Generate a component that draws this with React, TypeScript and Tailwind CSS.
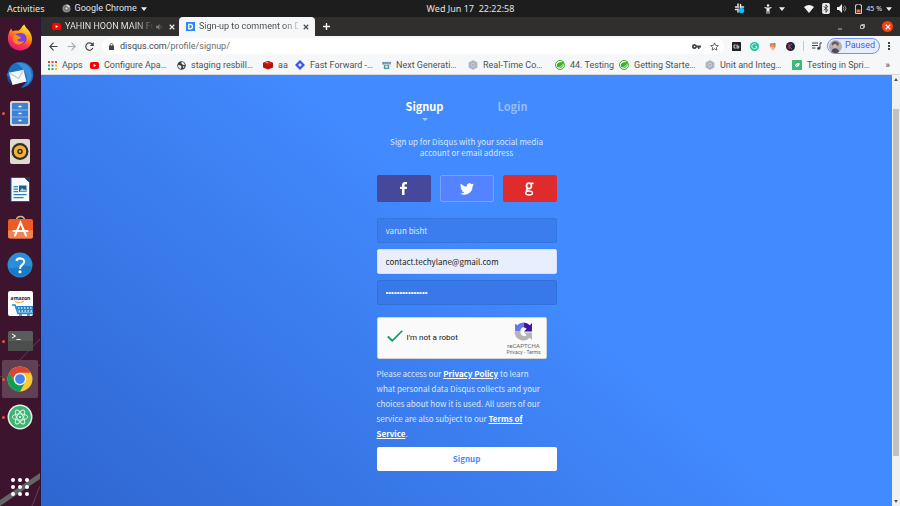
import React from "react";

type IconProps = { className?: string };

const YouTube = () => (
  <svg viewBox="0 0 20 20" className="h-[9px] w-[9px] shrink-0" aria-hidden="true">
    <rect x="0" y="2" width="20" height="16" rx="4" fill="#f00" />
    <path d="M8 6.500l6 3.500-6 3.500z" fill="#fff" />
  </svg>
);

const AppsGrid = () => (
  <svg viewBox="0 0 9 9" className="h-[9px] w-[9px] shrink-0" aria-hidden="true">
    <path d="M0 0h2v2H0zM3.500 0h2v2h-2zM7 0h2v2H7z" fill="#ea4335" />
    <path d="M0 3.500h2v2H0z" fill="#34a853" />
    <path d="M3.500 3.500h2v2h-2z" fill="#4285f4" />
    <path d="M7 3.500h2v2H7z" fill="#fbbc05" />
    <path d="M0 7h2v2H0zM3.500 7h2v2h-2z" fill="#34a853" />
    <path d="M7 7h2v2H7z" fill="#fbbc05" />
  </svg>
);

const Globe = () => (
  <svg viewBox="0 0 20 20" className="h-[9px] w-[9px] shrink-0" aria-hidden="true">
    <circle cx="10" cy="10" r="9.500" fill="#3c4043" />
    <path d="M2 9l6 1 2 3-2 5C4 16 2 13 2 9zM10 2l4 1 4 5-4 1-4-3zM13 11l4 1-3 4z" fill="#f1f3f4" />
  </svg>
);

const Redis = () => (
  <svg viewBox="0 0 20 20" className="h-[10px] w-[10px] shrink-0" aria-hidden="true">
    <path d="M0 6l10-4 10 4v9l-10 4-10-4z" fill="#b5120b" />
    <path d="M0 5.500l10-4 10 4-10 4.500z" fill="#d8241b" />
    <path d="M5 5l4-1.500 1 2z" fill="#fff" />
  </svg>
);

const Diamond = () => (
  <svg viewBox="0 0 20 20" className="h-[10px] w-[10px] shrink-0" aria-hidden="true">
    <path d="M10 0l10 10-10 10L0 10z" fill="#3f51e8" />
    <path d="M10 6l4 4-4 4-4-4z" fill="#dfe4ff" />
  </svg>
);

const Tools = () => (
  <svg viewBox="0 0 20 20" className="h-[9px] w-[9px] shrink-0" aria-hidden="true">
    <path d="M0 2h20v6H0z" fill="#8fa9c4" />
    <path d="M2 4h3M7 4h3M12 4h2M16 4h3" stroke="#5c7da3" strokeWidth="3" />
    <path d="M4 9h12v9H4z" fill="#4c9d92" />
    <circle cx="10" cy="13" r="3" fill="#cff0df" />
  </svg>
);

const Cube = () => (
  <svg viewBox="0 0 20 20" className="h-[10px] w-[10px] shrink-0" aria-hidden="true">
    <path d="M10 0l9 5v10l-9 5-9-5V5z" fill="#b3bccb" />
    <path d="M10 4l5 3v6l-5 3-5-3V7z" fill="#dde2ea" stroke="#8792a8" />
    <path d="M10 4v12M5 7l10 6M15 7L5 13" stroke="#8792a8" />
  </svg>
);

const Spring = () => (
  <svg viewBox="0 0 20 20" className="h-[10px] w-[10px] shrink-0" aria-hidden="true">
    <circle cx="10" cy="10" r="9" fill="#fff" stroke="#3fae29" strokeWidth="2" />
    <path d="M17 2c-2 3-5 2-9 3-5 2-6 8-2 11 7 2 13-4 11-14z" fill="#3fae29" />
    <path d="M5 15c5 0 8-2 10-6" stroke="#fff" strokeWidth="1.500" fill="none" />
  </svg>
);

const GreenLeaf = () => (
  <svg viewBox="0 0 20 20" className="h-[10px] w-[10px] shrink-0" aria-hidden="true">
    <rect width="20" height="20" rx="1" fill="#3cb878" />
    <path d="M6 14c-1-6 3-8 9-8 1 5-3 9-9 8z" fill="#fff" />
    <path d="M4 16l7-7" stroke="#3cb878" strokeWidth="1.500" />
  </svg>
);

const ChromeLogo = ({ className }: IconProps) => (
  <svg viewBox="0 0 48 48" className={className} aria-hidden="true">
    <circle cx="24" cy="24" r="23" fill="#fbc934" />
    <path d="M4.100 12.500A23 23 0 0 1 43.900 12.500H24A11.500 11.500 0 0 0 14 29.700z" fill="#db4437" />
    <path d="M4.100 12.500A23 23 0 0 0 24 47L34 29.700A11.500 11.500 0 0 1 14 29.700z" fill="#0f9d58" />
    <circle cx="24" cy="24" r="11.500" fill="#f1f1f1" />
    <circle cx="24" cy="24" r="9" fill="#4285f4" />
  </svg>
);

const bookmarks = [
  { label: "Apps", icon: <AppsGrid />, width: "w-[42px]" },
  { label: "Configure Apa…", icon: <YouTube />, width: "w-[87px]" },
  { label: "staging resbill…", icon: <Globe />, width: "w-[86px]" },
  { label: "aa", icon: <Redis />, width: "w-[32px]" },
  { label: "Fast Forward -…", icon: <Diamond />, width: "w-[87px]" },
  { label: "Next Generati…", icon: <Tools />, width: "w-[86px]" },
  { label: "Real-Time Co…", icon: <Cube />, width: "w-[87px]" },
  { label: "44. Testing", icon: <Spring />, width: "w-[64px]" },
  { label: "Getting Starte…", icon: <Spring />, width: "w-[86px]" },
  { label: "Unit and Integ…", icon: <Cube />, width: "w-[87px]" },
  { label: "Testing in Spri…", icon: <GreenLeaf />, width: "w-[82px]" },
];

const Firefox = () => (
  <svg viewBox="0 0 48 48" className="h-[27px] w-[27px]" aria-hidden="true">
    <defs>
      <linearGradient id="ff" x1="0.800" y1="0" x2="0.300" y2="1">
        <stop offset="0" stopColor="#fff44f" />
        <stop offset="0.400" stopColor="#ff980e" />
        <stop offset="0.700" stopColor="#ff3647" />
        <stop offset="1" stopColor="#e31587" />
      </linearGradient>
    </defs>
    <path d="M31 1c1 5 5 7 8 11 10 12 7 34-15 35C6 47-2 31 3 17c1-4 3-6 4-9l3 5c3-2 6-2 9-1 4-1 5-4 7-6 1-2 3-4 5-5z" fill="url(#ff)" />
    <path d="M14 20c5-5 14-6 19 0 5 8-1 17-10 16-8-1-11-9-9-16z" fill="#7542e5" />
    <path d="M12 20c3-1 7 0 10 2l4 3-8 3c2 4 9 5 13 1-2 7-11 10-17 5-5-4-5-10-2-14z" fill="#ff8a16" />
  </svg>
);

const Thunderbird = () => (
  <svg viewBox="0 0 48 48" className="h-[28px] w-[28px]" aria-hidden="true">
    <path d="M4 17C8 4 20-1 32 3c12 4 17 15 14 27-3 9-10 15-20 16l9-10L7 33 1 24z" fill="#1b6fc4" />
    <path d="M18 4c13-4 28 7 26 24-1 5-4 9-8 12 3-13-4-27-18-36z" fill="#3c8fd9" />
    <path d="M5 20l25-5 5 20-24 6z" fill="#f5f7fa" />
    <path d="M5 20l17 10 8-15" fill="none" stroke="#b6c5d6" strokeWidth="2" />
    <path d="M1 23c4 5 7 11 8 18l-6-7z" fill="#174b91" />
  </svg>
);

const Files = () => (
  <svg viewBox="0 0 40 50" className="h-[25px] w-[20px]" aria-hidden="true">
    <rect width="40" height="50" rx="4" fill="#d9d3cc" />
    <rect x="4" y="4" width="32" height="42" rx="2" fill="#3d82d6" />
    <path d="M4 18h32M4 32h32" stroke="#87b8ef" strokeWidth="2" />
    <path d="M17 11h6M17 25h6M17 39h6" stroke="#fff" strokeWidth="3" />
  </svg>
);

const Rhythmbox = () => (
  <svg viewBox="0 0 40 50" className="h-[25px] w-[20px]" aria-hidden="true">
    <rect width="40" height="50" rx="4" fill="#dfd9d0" />
    <circle cx="20" cy="25" r="17" fill="#2f2f2f" />
    <circle cx="20" cy="25" r="9" fill="none" stroke="#f5b32e" strokeWidth="7" />
    <circle cx="20" cy="25" r="2.500" fill="#f5b32e" />
  </svg>
);

const Writer = () => (
  <svg viewBox="0 0 40 50" className="h-[25px] w-[20px]" aria-hidden="true">
    <path d="M2 1h27l10 10v38H2z" fill="#f7fafc" stroke="#125f92" strokeWidth="2" />
    <path d="M28 0h12v12z" fill="#0d3f68" />
    <path d="M7 19h9M7 24h9M7 29h9M7 35h26M7 41h20" stroke="#2a84bd" strokeWidth="2.500" />
    <rect x="18" y="17" width="15" height="13" fill="#245d80" />
    <path d="M19 29l5-7 4 4 2-2 3 5z" fill="#a9d4e6" />
  </svg>
);

const Software = () => (
  <svg viewBox="0 0 50 50" className="h-[25px] w-[25px]" aria-hidden="true">
    <path d="M17 11C17 0 33 0 33 11" fill="none" stroke="#cdb78f" strokeWidth="3" />
    <rect y="8" width="50" height="39" rx="4" fill="#ef5b25" />
    <path d="M0 31h50v12a4 4 0 0 1-4 4H4a4 4 0 0 1-4-4z" fill="#f48152" />
    <path d="M14 41l11-26 11 26M11 32h28" fill="none" stroke="#fff" strokeWidth="4" strokeLinecap="round" />
  </svg>
);

const Help = () => (
  <svg viewBox="0 0 50 50" className="h-[26px] w-[26px]" aria-hidden="true">
    <circle cx="25" cy="25" r="24" fill="#2a8fd8" />
    <path d="M2 30a24 24 0 0 0 46 0C35 20 20 35 2 30z" fill="#1d79c0" />
    <path d="M18 17c2-7 16-6 15 2-1 6-8 6-8 13" fill="none" stroke="#fff" strokeWidth="4" />
    <circle cx="25" cy="38" r="3" fill="#fff" />
  </svg>
);

const Amazon = () => (
  <svg viewBox="0 0 50 50" className="h-[25px] w-[25px]" aria-hidden="true">
    <rect width="50" height="50" rx="4" fill="#fff" />
    <text x="25" y="17" textAnchor="middle" fontFamily="Open Sans, sans-serif" fontWeight="700" fontSize="10" fill="#222">amazon</text>
    <path d="M13 20c6 4 13 4 19 0" fill="none" stroke="#f59b23" strokeWidth="2" />
    <path d="M8 28h6l6 17h30" fill="none" stroke="#2488cf" strokeWidth="3" />
    <path d="M16 30h34v13H21z" fill="#2488cf" />
    <path d="M20 34h30M21 40h29" stroke="#d7edfb" strokeWidth="3" strokeDasharray="3 3" />
    <path d="M22 48h6M38 48h6" stroke="#2488cf" strokeWidth="3" />
  </svg>
);

const Terminal = () => (
  <svg viewBox="0 0 50 40" className="h-[20px] w-[25px]" aria-hidden="true">
    <rect width="50" height="40" rx="3" fill="#5a5c5b" />
    <path d="M0 20h50v17a3 3 0 0 1-3 3H3a3 3 0 0 1-3-3z" fill="#4c4e4d" />
    <path d="M8 6l7 4-7 4M17 17h8" fill="none" stroke="#fff" strokeWidth="2" />
  </svg>
);

const Atom = () => (
  <svg viewBox="0 0 50 50" className="h-[26px] w-[26px]" aria-hidden="true">
    <circle cx="25" cy="25" r="24" fill="#e5efe9" />
    <circle cx="25" cy="25" r="21" fill="#3fb373" />
    <g fill="none" stroke="#d8f7e4" strokeWidth="1.800">
      <ellipse cx="25" cy="25" rx="15" ry="6" />
      <ellipse cx="25" cy="25" rx="15" ry="6" transform="rotate(60 25 25)" />
      <ellipse cx="25" cy="25" rx="15" ry="6" transform="rotate(120 25 25)" />
    </g>
    <circle cx="25" cy="25" r="2" fill="#fff" />
  </svg>
);

const launchers = [
  { name: "Firefox", icon: <Firefox />, running: false, active: false },
  { name: "Thunderbird", icon: <Thunderbird />, running: false, active: false },
  { name: "Files", icon: <Files />, running: true, active: false },
  { name: "Rhythmbox", icon: <Rhythmbox />, running: false, active: false },
  { name: "Writer", icon: <Writer />, running: false, active: false },
  { name: "Software", icon: <Software />, running: false, active: false },
  { name: "Help", icon: <Help />, running: false, active: false },
  { name: "Amazon", icon: <Amazon />, running: false, active: false },
  { name: "Terminal", icon: <Terminal />, running: true, active: false },
  { name: "Chrome", icon: <ChromeLogo className="h-[26px] w-[26px]" />, running: true, active: true },
  { name: "Atom", icon: <Atom />, running: true, active: false },
];

const Caret = () => <svg viewBox="0 0 8 5" className="h-[4px] w-[6px] shrink-0" aria-hidden="true"><path d="M0 0h8L4 5z" fill="#eee" /></svg>;

function TopBar() {
  return (
    <header className="grid h-[17px] shrink-0 grid-cols-[1fr_auto_1fr] items-center bg-[#1d1d1d] pr-[8px] pl-[7px] text-[9px] leading-[17px] text-[#e2e2e2]">
      <div className="flex items-center gap-[17px]">
        <button>Activities</button>
        <button className="flex items-center gap-[4px] font-['Roboto',sans-serif]">
          <svg viewBox="0 0 20 20" className="h-[9px] w-[9px]" aria-hidden="true">
            <circle cx="10" cy="10" r="9" fill="#888" />
            <path d="M10 10V1a9 9 0 0 1 8 5z" fill="#ddd" />
            <circle cx="10" cy="10" r="4" fill="#ccc" stroke="#555" strokeWidth="2" />
          </svg>
          Google Chrome
          <Caret />
        </button>
      </div>
      <time className="pl-[42px] whitespace-pre">Wed Jun 17  22:22:58</time>
      <div className="flex items-center justify-end">
        <svg viewBox="0 0 22 22" className="mr-[19px] h-[11px] w-[11px]" aria-label="Slack">
          <path d="M8 2v3M3 8h6M8 12v6M13 3v6M15 8h4M3 13h2" stroke="#e8e8e8" strokeWidth="3" strokeLinecap="round" />
          <circle cx="15" cy="15" r="5.500" fill="#15b9f4" />
        </svg>
        <svg viewBox="0 0 16 20" className="mr-[7px] h-[10px] w-[8px]" aria-label="Accessibility">
          <circle cx="8" cy="3" r="2.500" fill="#eee" />
          <path d="M1 6l5 1h4l5-1v2l-4 1.500v10H9v-5H7v5H5v-10L1 8z" fill="#eee" />
        </svg>
        <Caret />
        <svg viewBox="0 0 20 16" className="mr-[8px] ml-[19px] h-[8px] w-[10px]" aria-label="Wi-Fi">
          <path d="M0 4q10-8 20 0L10 16z" fill="#f2f2f2" />
        </svg>
        <svg viewBox="0 0 14 20" className="mr-[7px] h-[11px] w-[8px]" aria-label="Bluetooth">
          <rect width="14" height="20" rx="3" fill="#eee" />
          <path d="M3 6l7 7-3 4V3l3 4-7 6" fill="none" stroke="#222" strokeWidth="1.500" />
        </svg>
        <svg viewBox="0 0 20 18" className="mr-[8px] h-[9px] w-[10px]" aria-label="Volume">
          <path d="M0 6h4l6-6v18l-6-6H0z" fill="#eee" />
          <path d="M12 5q4 4 0 8M15 3q6 6 0 12" fill="none" stroke="#bbb" strokeWidth="1.500" />
        </svg>
        <svg viewBox="0 0 14 20" className="mr-[4px] h-[10px] w-[7px]" aria-label="Battery">
          <path d="M4 0h6v2h3v17H1V2h3z" fill="none" stroke="#ccc" strokeWidth="2" />
          <path d="M3 11h8v6H3z" fill="#f36b35" />
        </svg>
        <span className="mr-[4px] text-[7px]">45 %</span>
        <Caret />
      </div>
    </header>
  );
}

function Dock() {
  return (
    <nav className="relative flex w-[41px] shrink-0 flex-col items-center overflow-hidden border-r border-[#2b1440] bg-[#3d142d] pt-px" aria-label="Launcher">
      <svg viewBox="0 0 40 230" className="absolute bottom-0 left-0 h-[230px] w-[40px]" aria-hidden="true">
        <path d="M0 224L40 197v6L0 230z" fill="#646565" />
        <path d="M16 88L40 63M0 101l40-12M32 230l8-20" stroke="#62405a" fill="none" />
      </svg>
      {launchers.map((item) => (
        <button
          key={item.name}
          aria-label={item.name}
          className={`relative flex h-[38px] w-[36px] shrink-0 items-center justify-center rounded-[2px] ${item.active ? "bg-[#614054]" : ""}`}
        >
          {item.icon}
          {item.running && <span className="absolute left-0 h-[3px] w-[3px] rounded-full bg-[#f0532d]" />}
        </button>
      ))}
      <button aria-label="Show applications" className="relative mt-auto mb-[10px]">
        <svg viewBox="0 0 18 18" className="h-[18px] w-[18px]" fill="#fff" aria-hidden="true">
          {[2, 9, 16].map((y) => [2, 9, 16].map((x) => <circle key={`${x}-${y}`} cx={x} cy={y} r="2" />))}
        </svg>
      </button>
    </nav>
  );
}

const Cross = ({ className }: IconProps) => (
  <svg viewBox="0 0 8 8" className={className} aria-hidden="true"><path d="M1 1l6 6M7 1L1 7" stroke="currentColor" strokeWidth="1.500" /></svg>
);

function TabStrip() {
  return (
    <div className="flex h-[19px] shrink-0 items-center bg-[#302f2e] text-[9px]">
      <div className="flex h-full w-[138px] items-center pl-[11px] text-[#eee]">
        <YouTube />
        <span className="ml-[4px] w-[88px] bg-gradient-to-r from-[#eee] from-80% to-[#444] bg-clip-text whitespace-nowrap text-transparent">YAHIN HOON MAIN Fu</span>
        <svg viewBox="0 0 12 10" className="ml-[3px] h-[6px] w-[7px]" aria-hidden="true">
          <path d="M0 3h3l3-3v10L3 7H0z" fill="#777" />
          <path d="M8 2q3 3 0 6" stroke="#777" fill="none" />
        </svg>
        <button aria-label="Close tab" className="ml-[6px]"><Cross className="h-[6px] w-[6px]" /></button>
      </div>
      <div className="flex h-full w-[136px] items-center rounded-t-[4px] bg-[#f5f7f8] pl-[7px] text-[#45484b]">
        <svg viewBox="0 0 18 18" className="h-[9px] w-[9px] shrink-0" aria-hidden="true">
          <rect width="18" height="18" fill="#2e86ff" />
          <path d="M5.500 4.500h3a4.500 4.500 0 0 1 0 9h-3z" fill="none" stroke="#fff" strokeWidth="2.500" />
        </svg>
        <span className="ml-[4px] w-[99px] bg-gradient-to-r from-[#45484b] from-85% to-[#ccc] bg-clip-text whitespace-nowrap text-transparent">Sign-up to comment on D</span>
        <button aria-label="Close tab" className="ml-[5px]"><Cross className="h-[6px] w-[6px]" /></button>
      </div>
      <button aria-label="New tab" className="ml-[8px] text-white">
        <svg viewBox="0 0 8 8" className="h-[7px] w-[7px]" aria-hidden="true"><path d="M4 0v8M0 4h8" stroke="currentColor" strokeWidth="1.500" /></svg>
      </button>
      <div className="ml-auto flex items-center gap-[17px] pr-[7px] text-[#bbb]">
        <button aria-label="Minimize"><svg viewBox="0 0 6 6" className="h-[6px] w-[6px]"><path d="M1 5h4" stroke="currentColor" /></svg></button>
        <button aria-label="Restore"><svg viewBox="0 0 10 10" className="h-[5px] w-[5px]"><path d="M3 3V1h6v6H7M1 3h6v6H1z" fill="none" stroke="currentColor" strokeWidth="2" /></svg></button>
        <button aria-label="Close" className="flex h-[11px] w-[11px] items-center justify-center rounded-full bg-[#f4430b] text-white"><Cross className="h-[6px] w-[6px]" /></button>
      </div>
    </div>
  );
}

function Toolbar() {
  return (
    <div className="flex h-[20px] shrink-0 items-center bg-[#f5f7f8] pr-[10px] pl-[8px] text-[9px] text-[#3c4043]">
      <button aria-label="Back"><svg viewBox="0 0 16 16" className="h-[9px] w-[9px]"><path d="M15 8H2M8 1L1.500 8 8 15" fill="none" stroke="#444" strokeWidth="2" /></svg></button>
      <button aria-label="Forward" className="ml-[9px]"><svg viewBox="0 0 16 16" className="h-[9px] w-[9px]"><path d="M1 8h13M8 1l6.500 7L8 15" fill="none" stroke="#aaa" strokeWidth="2" /></svg></button>
      <button aria-label="Reload" className="ml-[9px]"><svg viewBox="0 0 16 16" className="h-[9px] w-[9px]"><path d="M14 10.500A6.500 6.500 0 1 1 12.500 3.500L14 5" fill="none" stroke="#444" strokeWidth="2" /><path d="M15.500 0v7h-7z" fill="#444" /></svg></button>
      <div className="ml-[8px] flex h-[16px] min-w-0 flex-1 items-center rounded-full bg-white pr-[5px] pl-[7px]">
        <svg viewBox="0 0 10 14" className="mr-[6px] h-[7px] w-[5px] shrink-0" aria-hidden="true"><path d="M0 5h10v9H0z" fill="#444" /><path d="M2.500 6V3.500a2.500 2.500 0 0 1 5 0V6" fill="none" stroke="#444" strokeWidth="1.500" /></svg>
        <div className="relative h-[16px] min-w-0 flex-1 leading-[16px]">
          <span aria-hidden="true">disqus.com<span className="text-[#6a6d70]">/profile/signup/</span></span>
          <input aria-label="Address" defaultValue="disqus.com/profile/signup/" className="absolute inset-0 w-full bg-transparent text-transparent outline-none" />
        </div>
        <svg viewBox="0 0 18 10" className="mr-[9px] h-[5px] w-[9px] shrink-0" aria-label="Saved password"><path d="M5 0a5 5 0 1 0 4.500 7H12v3h3V7h3V3H9.500A5 5 0 0 0 5 0zm0 3.500a1.500 1.500 0 1 1 0 3 1.500 1.500 0 0 1 0-3z" fill="#444" fillRule="evenodd" /></svg>
        <svg viewBox="0 0 20 20" className="h-[9px] w-[9px] shrink-0" aria-label="Bookmark"><path d="M10 2l2.500 5.500 6 .6-4.500 4 1.300 6L10 15l-5.300 3.100 1.300-6-4.500-4 6-.6z" fill="none" stroke="#444" strokeWidth="1.800" /></svg>
      </div>
      <div className="ml-[8px] flex shrink-0 items-center">
        <svg viewBox="0 0 18 18" className="h-[9px] w-[9px]" aria-hidden="true"><rect width="18" height="18" rx="1" fill="#222" /><path d="M7.500 6H4v6h3.500M10 5v8M10 8h3.500v4H10" fill="none" stroke="#ddd" strokeWidth="1.800" /></svg>
        <svg viewBox="0 0 18 18" className="ml-[9px] h-[9px] w-[9px]" aria-hidden="true"><circle cx="9" cy="9" r="9" fill="#15c39a" /><path d="M12.500 5.500a5 5 0 1 0 1 4H10M13.500 9v4" fill="none" stroke="#fff" strokeWidth="1.800" /></svg>
        <svg viewBox="0 0 18 18" className="ml-[9px] h-[9px] w-[9px]" aria-hidden="true"><path d="M3 4l6-2-1 6z" fill="#7950c8" /><path d="M8 3c6-3 9 3 7 7l-5 7-4-5-3-5z" fill="#f48451" /><path d="M12 1l4 3-5 2z" fill="#38ae72" /><path d="M6 9l6 2-2 6-3-4z" fill="#f7bc83" /></svg>
        <svg viewBox="0 0 18 18" className="ml-[9px] h-[9px] w-[9px]" aria-hidden="true"><circle cx="9" cy="9" r="9" fill="#20213e" /><path d="M6 4v10M12 4L6 9l6 5" fill="none" stroke="#e34734" strokeWidth="2" /></svg>
        <span className="mx-[8px] h-[10px] w-px bg-[#c7cacd]" />
        <svg viewBox="0 0 20 16" className="h-[8px] w-[10px]" aria-label="Media"><path d="M0 2h12M0 7h12M0 12h7" stroke="#444" strokeWidth="2" /><path d="M16 12V2h4" fill="none" stroke="#444" strokeWidth="2" /><circle cx="13.500" cy="12.500" r="3" fill="#444" /></svg>
        <button className="ml-[5px] flex h-[16px] w-[53px] items-center rounded-full border border-[#7793e8] bg-[#e8edfc] pl-px text-[#4c5fd7]">
          <svg viewBox="0 0 26 26" className="mr-[3px] h-[13px] w-[13px]" aria-hidden="true"><circle cx="13" cy="13" r="13" fill="#b9aeb0" /><path d="M5 8c2-8 13-7 15 0l-3 4H8z" fill="#625c6e" /><circle cx="12" cy="12" r="4" fill="#d7b7a8" /><path d="M5 24c0-10 14-10 15 0-4 3-10 3-15 0z" fill="#4c4960" /></svg>
          Paused
        </button>
        <button aria-label="Menu" className="ml-[8px]"><svg viewBox="0 0 2 8" className="h-[8px] w-[2px]" fill="#444"><path d="M0 0h2v2H0zM0 3h2v2H0zM0 6h2v2H0z" /></svg></button>
      </div>
    </div>
  );
}

function Bookmarks() {
  return (
    <nav aria-label="Bookmarks" className="flex h-[19px] shrink-0 items-center border-b border-[#d6d9dc] bg-[#f5f7f8] pr-[10px] pl-[7px] text-[9px] leading-[18px] text-[#505356]">
      {bookmarks.map((b) => (
        <a key={b.label} href="#" className={`flex shrink-0 items-center gap-[5px] whitespace-nowrap ${b.width}`}>
          {b.icon}
          {b.label}
        </a>
      ))}
      <button aria-label="More bookmarks" className="ml-auto font-bold">»</button>
    </nav>
  );
}

function Recaptcha() {
  return (
    <div className="mt-[12px] flex h-[42px] w-[170px] items-center rounded-[2px] border border-[#d3d3d3] bg-[#fafafa] pr-[5px] pl-[9px] font-['Roboto',sans-serif]">
      <label className="flex items-center gap-[4px] text-[8px] text-[#111]">
        <span className="relative flex h-[16px] w-[16px] items-start">
          <input type="checkbox" defaultChecked className="absolute inset-0 m-0 h-full w-full appearance-none" />
          <svg viewBox="0 0 32 24" className="h-[12px] w-[16px]" aria-hidden="true"><path d="M1.500 13l9 8.500L30.500 1.500" fill="none" stroke="#109d58" strokeWidth="3.500" /></svg>
        </span>
        I'm not a robot
      </label>
      <div className="ml-auto flex flex-col items-center text-[#666]">
        <svg viewBox="0 0 36 36" className="h-[19px] w-[19px]" aria-hidden="true">
          <path d="M18 1a17 17 0 0 1 12 5l4-4v16H19l5-5c-2-2-4-3-6-3z" fill="#3b14a8" />
          <path d="M18 1A17 17 0 0 0 6 6L2 3v15h10c0-4 2-8 6-8z" fill="#6279e8" />
          <path d="M1 18a17 17 0 0 0 29 12l4 4V20H19l5 5c-5 4-12 1-12-7z" fill="#b4b4b4" />
        </svg>
        <span className="text-[6px] leading-[9px]">reCAPTCHA</span>
        <span className="text-[5px] leading-[5px]"><a href="#">Privacy</a> - <a href="#">Terms</a></span>
      </div>
    </div>
  );
}

const field = "block h-[25px] w-full rounded-[2px] border px-[8px] outline-none";

function SignupPage() {
  return (
    <main className="min-w-0 flex-1 bg-[linear-gradient(40deg,#2f66d0_0%,#428aff_56%)] font-['Noto_Sans_CJK_SC',sans-serif] text-[8px] text-[#dce8ff]">
      <form className="mx-auto flex w-[180px] flex-col pt-[22px]" onSubmit={(e) => e.preventDefault()}>
        <div className="grid grid-cols-2 pl-[4px] text-center text-[11px] leading-[18px] font-bold">
          <button type="button" className="text-white">Signup</button>
          <button type="button" className="text-[#94bdff]">Login</button>
        </div>
        <div className="grid grid-cols-2 justify-items-center pt-[3px] pl-[4px]">
          <svg viewBox="0 0 6 3" className="h-[3px] w-[6px]" aria-hidden="true"><path d="M0 0h6L3 3z" fill="#a8c9ff" /></svg>
        </div>
        <p className="mt-[15px] px-[8px] text-center leading-[11px]">Sign up for Disqus with your social media account or email address</p>
        <div className="mt-[17px] grid grid-cols-3 gap-[9px]">
          <button type="button" aria-label="Facebook" className="flex h-[27px] items-center justify-center rounded-[2px] bg-[#46499b]">
            <svg viewBox="0 0 14 26" className="h-[13px] w-[7px]" fill="#fff" aria-hidden="true"><path d="M4 26V14H0V9.500h4V6c0-4 2.500-6 6-6h4v4.500h-2.500C9.500 4.500 9 5 9 7v2.500h5L13.500 14H9v12z" /></svg>
          </button>
          <button type="button" aria-label="Twitter" className="flex h-[27px] items-center justify-center rounded-[2px] border border-[#76a5ff] bg-[#5583ff]">
            <svg viewBox="0 0 24 20" className="h-[12px] w-[14px]" fill="#fff" aria-hidden="true"><path d="M24 2.400a10 10 0 0 1-2.800.8A5 5 0 0 0 23.300.500a10 10 0 0 1-3.100 1.200 4.900 4.900 0 0 0-8.400 4.500A14 14 0 0 1 1.700 1.100a4.900 4.900 0 0 0 1.500 6.600A5 5 0 0 1 1 7.100a4.900 4.900 0 0 0 3.900 4.900 5 5 0 0 1-2.200.1 4.900 4.900 0 0 0 4.600 3.400A10 10 0 0 1 0 17.500a14 14 0 0 0 21.500-12.400A10 10 0 0 0 24 2.400z" /></svg>
          </button>
          <button type="button" aria-label="Google" className="flex h-[27px] items-center justify-center rounded-[2px] bg-[#df2b2b]">
            <svg viewBox="0 0 18 28" className="h-[14px] w-[9px]" fill="none" stroke="#fff" aria-hidden="true"><ellipse cx="8" cy="7.500" rx="5" ry="5.500" strokeWidth="3.500" /><path d="M11 3.500L17 2" strokeWidth="3" /><path d="M6 13c-5 2-4 5 1 5 11 0 10 8 1 8-9 0-8-7-2-8" strokeWidth="2.800" /></svg>
          </button>
        </div>
        <div className="mt-[16px] flex flex-col gap-[6px]">
          <input aria-label="Name" defaultValue="varun bisht" className={`${field} border-[#3476df] bg-[#3c7ded] text-[#dce8ff]`} />
          <input aria-label="Email" type="email" defaultValue="contact.techylane@gmail.com" className={`${field} border-[#d5e1fc] bg-[#e8eefd] text-[#222]`} />
          <input aria-label="Password" type="password" defaultValue="passwordpasswor" className={`${field} border-[#3171da] bg-[#3878e8] font-['Liberation_Sans',sans-serif] text-white`} />
        </div>
        <Recaptcha />
        <p className="mt-[7px] pr-[10px] leading-[15px]">
          Please access our <a href="#" className="font-bold text-white underline">Privacy Policy</a> to learn what personal data Disqus collects and your choices about how it is used. All users of our service are also subject to our <a href="#" className="font-bold text-white underline">Terms of Service</a>.
        </p>
        <button type="submit" className="mt-[6px] h-[24px] rounded-[2px] bg-white font-bold text-[#438aff]">Signup</button>
      </form>
    </main>
  );
}

function Scrollbar() {
  return (
    <div className="flex w-[8px] shrink-0 flex-col items-center bg-[#f1f1f1] py-[3px]" aria-hidden="true">
      <svg viewBox="0 0 4 3" className="h-[3px] w-[4px]"><path d="M0 3h4L2 0z" fill="#555" /></svg>
      <div className="mt-[28px] mb-[44px] w-[6px] flex-1 bg-[#c1c1c1]" />
      <svg viewBox="0 0 4 3" className="h-[3px] w-[4px]"><path d="M0 0h4L2 3z" fill="#555" /></svg>
    </div>
  );
}

export default function App() {
  return (
    <div className="flex h-screen flex-col overflow-hidden font-['Noto_Sans',sans-serif]">
      <TopBar />
      <div className="flex min-h-0 flex-1">
        <Dock />
        <div className="flex min-w-0 flex-1 flex-col font-['Roboto',sans-serif]">
          <TabStrip />
          <Toolbar />
          <Bookmarks />
          <div className="flex min-h-0 flex-1">
            <SignupPage />
            <Scrollbar />
          </div>
        </div>
      </div>
    </div>
  );
}
